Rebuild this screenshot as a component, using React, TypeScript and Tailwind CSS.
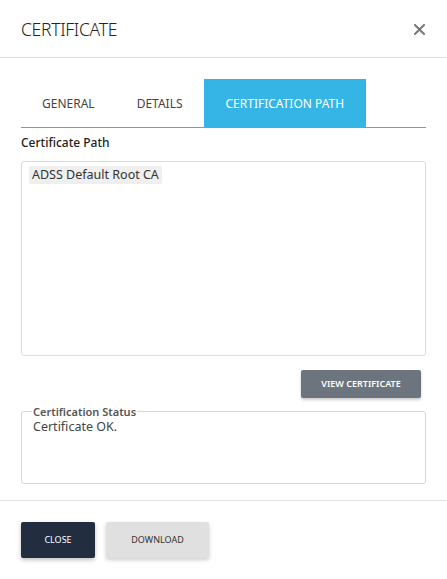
import React from "react";

export default function App() {
  const font = { fontFamily: '"Noto Sans", "Open Sans", sans-serif' };
  return (
    <div className="w-[447px] h-[579px] bg-white overflow-hidden text-[#333]" style={font}>
      <div className="h-[58px] flex items-center justify-between pl-[21px] pr-[22px] border-b border-[#e2e2e2]">
        <div className="text-[17.5px] font-light tracking-[-0.3px] text-[#222] pt-[1px]">CERTIFICATE</div>
        <svg width="11" height="11" viewBox="0 0 11 11" className="mt-[1px]">
          <path d="M1 1L10 10M10 1L1 10" stroke="#777" strokeWidth="2" strokeLinecap="square" />
        </svg>
      </div>
      <div className="px-[21px]">
        <div className="mt-[21px] flex h-[49px] border-b border-[#35b5e5]">
          <div className="px-[21px] pt-[1px] flex items-center text-[12px] text-[#444]">GENERAL</div>
          <div className="px-[21px] pt-[1px] flex items-center text-[12px] text-[#444]">DETAILS</div>
          <div className="px-[22px] pt-[1px] flex items-center text-[12px] text-white bg-[#35b5e5]">CERTIFICATION PATH</div>
        </div>
        <div className="mt-[6px] text-[12px] font-medium text-[#222] leading-[18px]">Certificate Path</div>
        <div className="mt-[9px] h-[195px] border border-[#dcdcdc] rounded-[3px] pt-[4px] pl-[7px] flex items-start">
          <span className="block bg-[#efefef] rounded-[2px] px-[3px] text-[12.5px] leading-[18px] text-[#333]">ADSS Default Root CA</span>
        </div>
        <div className="mt-[14px] flex justify-end pr-[5px]">
          <div className="w-[120px] h-[28px] bg-[#6c757d] rounded-[2px] flex items-center justify-center text-[9px] font-semibold text-white shadow-[0_2px_3px_rgba(0,0,0,0.2)]">VIEW CERTIFICATE</div>
        </div>
        <fieldset className="mt-[7px] h-[79px] border border-[#d6d6d6] rounded-[3px] pl-[10px] pr-[10px]">
          <legend className="px-[1px] text-[11px] font-semibold text-[#555] leading-[13px]">Certification Status</legend>
          <div className="mt-[1px] pl-[1px] text-[12.5px] text-[#444] leading-[16px]">Certificate OK.</div>
        </fieldset>
      </div>
      <div className="mt-[16px] border-t border-[#e2e2e2] px-[21px] pt-[21px] flex gap-[11px]">
        <div className="w-[74px] h-[36px] bg-[#222d3f] rounded-[2px] flex items-center justify-center text-[9px] text-white shadow-[0_2px_4px_rgba(0,0,0,0.25)]">CLOSE</div>
        <div className="w-[103px] h-[36px] bg-[#e0e0e0] rounded-[2px] flex items-center justify-center text-[9px] text-[#333] shadow-[0_2px_4px_rgba(0,0,0,0.2)]">DOWNLOAD</div>
      </div>
    </div>
  );
}
